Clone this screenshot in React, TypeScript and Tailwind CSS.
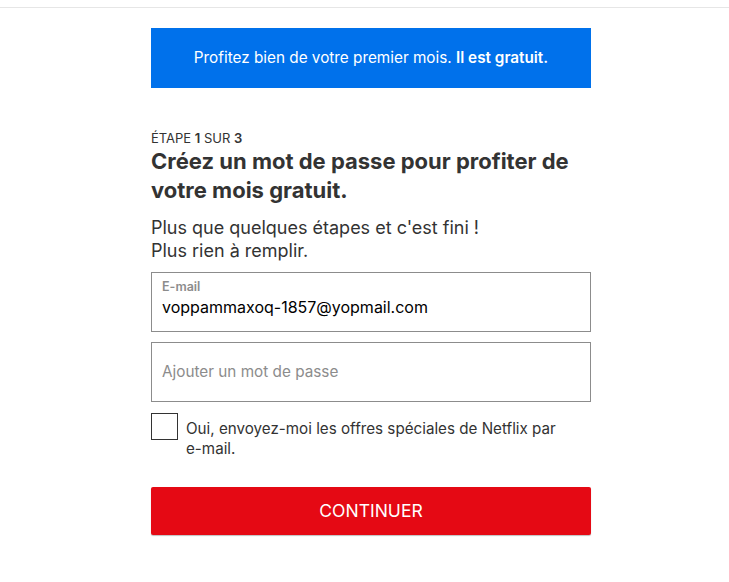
import React from "react";

export default function App() {
  return (
    <div className="min-h-[582px] bg-white font-['Inter','Noto_Sans',sans-serif] text-[#333]">
      <div className="h-[8px] border-b border-[#e6e6e6]" />
      <div className="ml-[151px] w-[440px] pt-[20px]">
        <div className="flex h-[60px] items-center justify-center bg-[#0071eb] text-[15.3px] text-white">
          <span>
            Profitez bien de votre premier mois. <b className="font-semibold">Il est gratuit.</b>
          </span>
        </div>

        <div className="mt-[42px] text-[13px] uppercase leading-[16px] text-[#333]">
          Étape <b className="font-semibold">1</b> sur <b className="font-semibold">3</b>
        </div>
        <h1 className="mt-[1px] text-[22px] font-bold leading-[29px] text-[#333]">
          Créez un mot de passe pour profiter de votre mois gratuit.
        </h1>
        <p className="mt-[11px] text-[18px] leading-[23px] text-[#333]">
          Plus que quelques étapes et c'est fini !
          <br />
          Plus rien à remplir.
        </p>

        <div className="mt-[10px] flex flex-col gap-[10px]">
          <div className="flex h-[60px] flex-col border border-[#8c8c8c] px-[10px] pt-[7px]">
            <span className="text-[12.5px] font-semibold leading-[14px] text-[#8c8c8c]">E-mail</span>
            <span className="mt-[3px] text-[16px] leading-[20px] text-black">voppammaxoq-1857@yopmail.com</span>
          </div>
          <div className="flex h-[60px] items-center border border-[#8c8c8c] px-[10px]">
            <span className="text-[15.3px] text-[#8c8c8c]">Ajouter un mot de passe</span>
          </div>
        </div>

        <div className="mt-[11px] flex items-start gap-[8px]">
          <div className="h-[27px] w-[27px] shrink-0 border border-[#333]" />
          <p className="pt-[6px] text-[15.2px] leading-[20px] text-[#333]">
            Oui, envoyez-moi les offres spéciales de Netflix par{" "}
            <span className="whitespace-nowrap">e-mail.</span>
          </p>
        </div>

        <button className="mt-[28px] flex h-[48px] w-full items-center justify-center rounded-[2px] bg-[#e50914] text-[17.5px] uppercase text-white shadow-[0_1px_1px_rgba(0,0,0,0.25)]">
          Continuer
        </button>
      </div>
    </div>
  );
}
